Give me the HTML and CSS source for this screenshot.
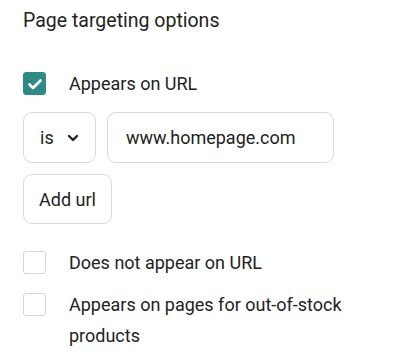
FILE: index.html
```html
<!DOCTYPE html>
<html lang="en">
<head>
  <meta charset="UTF-8" />
  <meta name="viewport" content="width=device-width, initial-scale=1.0"/>
  <title>Page targeting options</title>
  <link rel="stylesheet" href="styles.css">
</head>
<body>

  <h2 class="title">Page targeting options</h2>

  <label class="option">
    <span class="box checked">
      <svg width="16" height="16" viewBox="0 0 16 16"><path d="M2.5 8.5l3.5 3.5 7.5-7.5" fill="none" stroke="#fff" stroke-width="2.6" stroke-linecap="round" stroke-linejoin="round"/></svg>
    </span>
    <span class="text">Appears on URL</span>
  </label>

  <div class="url-row">
    <div class="select">
      <span>is</span>
      <svg width="12" height="8" viewBox="0 0 12 8"><path d="M2 2l4 4 4-4" fill="none" stroke="#222" stroke-width="2.4" stroke-linecap="round" stroke-linejoin="round"/></svg>
    </div>
    <div class="url-input">www.homepage.com</div>
  </div>

  <button class="add-btn">Add url</button>

  <div class="more">
    <label class="option">
      <span class="box"></span>
      <span class="text">Does not appear on URL</span>
    </label>
    <label class="option">
      <span class="box"></span>
      <span class="text">Appears on pages for out-of-stock products</span>
    </label>
  </div>

</body>
</html>
```

FILE: styles.css
```css
body {
  margin: 0;
  padding: 8px 23px;
  font-family: Roboto, "Noto Sans", sans-serif;
  color: #222;
  background: #fff;
}

.title {
  font-size: 19.5px;
  font-weight: 400;
  line-height: 26px;
  margin: 0 0 34px;
}

.option {
  display: flex;
  align-items: flex-start;
  gap: 23px;
  font-size: 18px;
  line-height: 31px;
}

.box {
  flex: none;
  width: 23px;
  height: 23px;
  margin-top: 4px;
  box-sizing: border-box;
  border: 1px solid #d6d6d6;
  border-radius: 3px;
  display: flex;
  align-items: center;
  justify-content: center;
}

.box.checked {
  background: #2e8a84;
  border-color: #2e8a84;
}

.text {
  max-width: 300px;
}

.url-row {
  display: flex;
  gap: 11px;
  margin-top: 13px;
}

.select, .url-input, .add-btn {
  box-sizing: border-box;
  height: 51px;
  border: 1px solid #dadada;
  border-radius: 9px;
  font-family: inherit;
  font-size: 18px;
  color: #222;
  background: #fff;
  display: flex;
  align-items: center;
}

.select {
  width: 73px;
  padding: 0 16px;
  justify-content: space-between;
}

.url-input {
  width: 227px;
  padding: 0 18px;
}

.add-btn {
  margin-top: 11px;
  height: 50px;
  padding: 0 15px;
}

.more {
  margin-top: 23px;
  display: flex;
  flex-direction: column;
  gap: 11px;
}
```
